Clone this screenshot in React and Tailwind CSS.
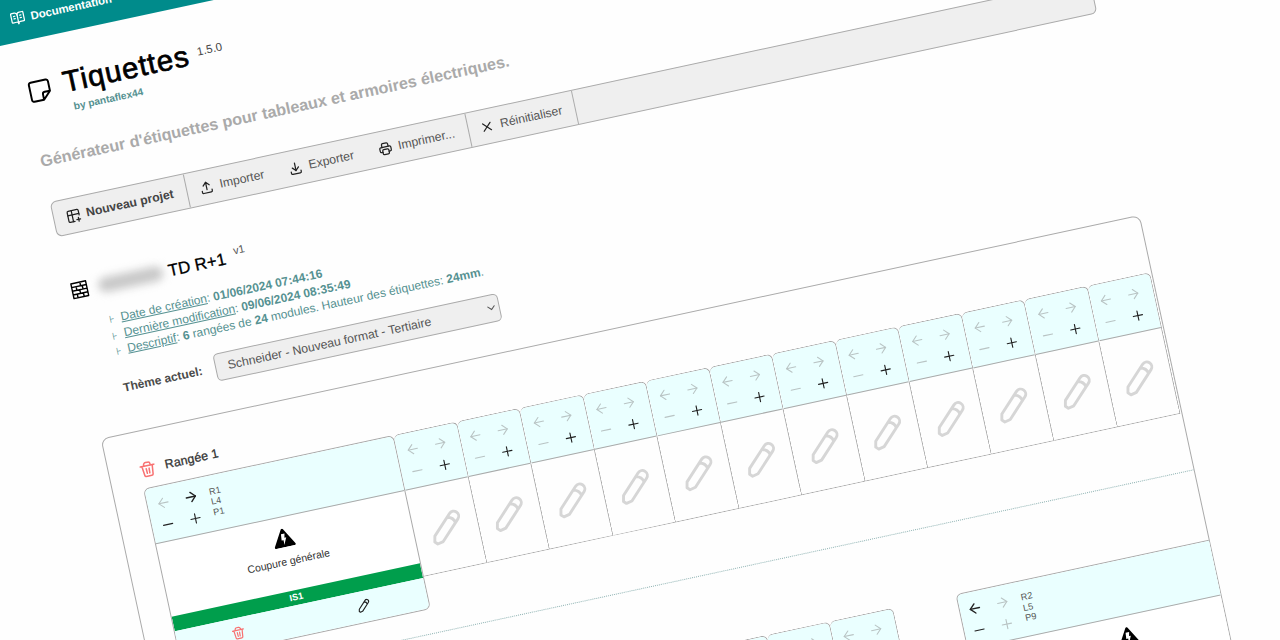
import React from 'react';
import { TbTablePlus, TbUpload, TbDownload, TbPrinter, TbX } from 'react-icons/tb';
import { ArrowLeft, ArrowRight, Plus, Minus, ChevronDown, BookOpenText } from 'lucide-react';

function Trash({ className }) {
  return (
    <svg viewBox="0 0 24 24" fill="none" stroke="currentColor" strokeWidth="2.1" strokeLinecap="round" strokeLinejoin="round" className={className}>
      <path d="M2.500 7h19M4.800 7l1.400 12.700a2 2 0 0 0 2 1.800h7.600a2 2 0 0 0 2-1.800L19.200 7M7.500 7V5.500a3 3 0 0 1 3-3h3a3 3 0 0 1 3 3V7M10 11l.3 6.500M14 11l-.3 6.500" />
    </svg>
  );
}

function Pencil({ className }) {
  return (
    <svg viewBox="-18 -18 36 36" fill="none" stroke="currentColor" strokeWidth="2.9" strokeLinecap="round" strokeLinejoin="round" className={className}>
      <path transform="rotate(45)" d="M-5-14a5 5 0 0 1 10 0V13L1.800 18h-3.600L-5 13zM-5-9.500q5-3.500 10 0" />
    </svg>
  );
}

function Note({ className }) {
  return (
    <svg viewBox="0 0 24 24" fill="none" stroke="currentColor" strokeWidth="1.8" strokeLinecap="round" strokeLinejoin="round" className={className}>
      <path d="M14 21H5a2 2 0 0 1-2-2V5a2 2 0 0 1 2-2h14a2 2 0 0 1 2 2v9zM14 21v-5a2 2 0 0 1 2-2h5" />
    </svg>
  );
}

function Wall({ className }) {
  return (
    <svg viewBox="0 0 24 24" fill="none" stroke="currentColor" strokeWidth="1.7" strokeLinejoin="round" className={className}>
      <path d="M3 3h18v18H3zM3 7.500h18M3 12h18M3 16.500h18M14 3v4.500M8.500 7.500V12M16 7.500V12M12 12v4.500M8 16.500V21M15.500 16.500V21" />
    </svg>
  );
}

function Danger({ className }) {
  return (
    <svg viewBox="0 0 24 21" className={className}>
      <path d="M12 1.500L22.500 19.500H1.500z" fill="#000" stroke="#000" strokeWidth="2.600" strokeLinejoin="round" />
      <path d="M10 6h4l-1 4.500h2l-3.800 8 .3-5.500H9.300z" fill="#fff" />
    </svg>
  );
}

const on = 'text-[#222]';
const off = 'text-[#b9c4c4]';

function Head({ left, right, minus, plus, lines }) {
  return (
    <div className="flex h-[56px] bg-[#eaffff] border-b border-[#aaa] pt-[5.500px] pl-[2px]">
      <div className="grid h-[44.400px] w-[55.600px] shrink-0 grid-cols-2 place-items-center">
        <ArrowLeft className={`size-[16px] ${left ? on : off}`} strokeWidth={left ? 2.100 : 1.600} />
        <ArrowRight className={`size-[16px] ${right ? on : off}`} strokeWidth={right ? 2.100 : 1.600} />
        <Minus className={`size-[16px] ${minus ? on : off}`} strokeWidth={1.700} />
        <Plus className={`size-[16px] ${plus ? on : off}`} strokeWidth={1.700} />
      </div>
      {lines && (
        <div className="pl-[5.200px] pt-[5.500px] text-[9.200px] leading-[10.300px] text-[#555]">
          {lines.map((l) => <div key={l}>{l}</div>)}
        </div>
      )}
    </div>
  );
}

function EmptyModule() {
  return (
    <div className="h-[144.500px] w-[64.500px] shrink-0 overflow-hidden rounded-t-[6px] border-t border-r border-b border-[#aaa]">
      <Head plus />
      <div className="flex h-[90px] items-center justify-center">
        <Pencil className="size-[36px] text-[#d6d6d6]" />
      </div>
    </div>
  );
}

function Module({ className, label, tag, ...head }) {
  return (
    <div className={`shrink-0 overflow-hidden rounded-[6px] border border-[#aaa] bg-white ${className}`}>
      <Head {...head} />
      <div className="-ml-[2px] flex h-[73.500px] flex-col items-center pt-[11px]">
        <Danger className="h-[19px] w-[22px]" />
        <div className="mt-[6.500px] text-[10.500px] leading-[14px] text-[#333]">{label}</div>
      </div>
      <div className="h-[15px] bg-[#009e4c] pr-[2px] text-center text-[9.200px] font-bold leading-[15px] text-white">{tag}</div>
      <div className="-ml-[2px] grid h-[31px] grid-cols-2 place-items-center bg-[#eaffff]">
        <Trash className="size-[14px] text-[#f87272]" />
        <Pencil className="size-[14px] text-[#222]" />
      </div>
    </div>
  );
}

function RowTitle({ children }) {
  return (
    <div className="flex h-[20px] items-center gap-[9px]">
      <Trash className="size-[17.500px] text-[#f87272]" />
      <span className="text-[12.300px] tracking-[0.150px] text-[#333] [-webkit-text-stroke:0.3px_#333]">{children}</span>
    </div>
  );
}

function Tool({ icon: Icon, className = '', children }) {
  return (
    <div className={`flex items-center gap-[6px] ${className}`}>
      <Icon className="size-[15px] text-[#222]" />
      <span>{children}</span>
    </div>
  );
}

function Detail({ children }) {
  return (
    <li className="flex h-[16.200px] items-center">
      <span className="w-[12px] pt-[3px] text-[10px] leading-none">⊦</span>
      <span className="whitespace-pre">{children}</span>
    </li>
  );
}

export default function App() {
  return (
    <div className="h-[640px] w-[1280px] overflow-hidden bg-[#fefefe] font-['Liberation_Sans',Arial,sans-serif]">
      <div className="h-[960px] w-[1300px] origin-top-left rotate-[-12.150deg] whitespace-nowrap">
        <header className="-ml-[40px] flex h-[45.400px] items-center bg-[#008b8b] pl-[45.500px] text-white">
          <BookOpenText className="mb-[1.500px] size-[15px]" strokeWidth={2} />
          <span className="ml-[6px] text-[11.400px] font-bold">Documentation</span>
        </header>

        <main className="pl-[5.500px]">
          <div className="flex h-[101.600px] pt-[27.700px]">
            <Note className="mt-[10.500px] ml-[1.800px] size-[26px] text-black" />
            <div className="ml-[7px]">
              <div className="flex h-[42px]">
                <h1 className="pt-[4px] pl-[4px] text-[29.400px] leading-[34px] tracking-[1px] text-black [-webkit-text-stroke:0.7px_#000]">Tiquettes</h1>
                <span className="ml-[8.500px] pt-[11.500px] text-[11.500px] leading-[14px] text-[#444]">1.5.0</span>
              </div>
              <div className="-mt-[1.500px] ml-[9.500px] text-[10.200px] leading-[12px] font-bold text-[#559191]">by pantaflex44</div>
            </div>
          </div>
          <p className="h-[20px] pt-[9px] text-[16.240px] leading-[20px] font-bold text-[#aaa]">Générateur d'étiquettes pour tableaux et armoires électriques.</p>

          <div className="mt-[41.400px] flex h-[35.500px] w-[1064.500px] overflow-hidden rounded-[6px] border border-[#aaa] bg-[#efefef] text-[12.270px] text-[#555]">
            <Tool icon={TbTablePlus} className="w-[136.500px] border-r border-[#aaa] pl-[12px] font-bold text-[#444]">Nouveau projet</Tool>
            <div className="flex w-[288px] border-r border-[#aaa] pl-[12px]">
              <Tool icon={TbUpload} className="w-[91px]">Importer</Tool>
              <Tool icon={TbDownload} className="w-[91.500px]">Exporter</Tool>
              <Tool icon={TbPrinter}>Imprimer...</Tool>
            </div>
            <Tool icon={TbX} className="w-[109px] border-r border-[#aaa] pl-[11px]">Réinitialiser</Tool>
          </div>

          <section className="pt-[43.500px] pl-[1.500px]">
            <div className="flex h-[26px] items-center">
              <Wall className="size-[20px] text-black" />
              <div className="mt-[1px] ml-[9px] h-[15px] w-[66px] rounded-full bg-[#c8c8c8] blur-[4px]" />
              <h2 className="ml-[5.500px] text-[16.900px] text-black [-webkit-text-stroke:0.3px_#000]">TD R+1</h2>
              <span className="mb-[12px] ml-[9px] text-[11px] text-[#555]">v1</span>
            </div>
            <ul className="mt-[13.500px] ml-[32.300px] text-[12px] text-[#559191]">
              <Detail><u>Date de création</u>: <b>01/06/2024 07:44:16</b></Detail>
              <Detail><u>Dernière modification</u>: <b>09/06/2024 08:35:49</b></Detail>
              <Detail><u>Descriptif</u>: <b>6</b> rangées de <b>24</b> modules. Hauteur des étiquettes: <b>24mm</b>.</Detail>
            </ul>
            <div className="mt-[15.500px] ml-[32px] flex h-[28px] items-center">
              <label className="w-[93.500px] text-[12px] font-bold text-[#4a4a4a]">Thème actuel:</label>
              <div className="flex h-[28px] w-[291px] items-center justify-between rounded-[5px] border border-[#aaa] bg-[#efefef] pr-[1px] pl-[12.500px] text-[12.270px] text-[#555]">
                Schneider - Nouveau format - Tertiaire
                <ChevronDown className="size-[13px]" />
              </div>
            </div>
          </section>

          <section className="mt-[30.600px] h-[560px] w-[1063.500px] overflow-hidden rounded-[8px] border border-[#aaa]">
            <div className="h-[260.800px] border-b border-dotted border-[#8fb3b3] pt-[29px] pl-[30.500px]">
              <RowTitle>Rangée 1</RowTitle>
              <div className="mt-[8.500px] flex">
                <Module className="w-[256px]" right minus plus lines={['R1', 'L4', 'P1']} label="Coupure générale" tag="IS1" />
                {Array.from({ length: 12 }, (_, i) => <EmptyModule key={i} />)}
              </div>
            </div>
            <div className="pt-[42.500px] pl-[30.500px]">
              <RowTitle>Rangée 2</RowTitle>
              <div className="mt-[8.500px] flex">
                <Module className="w-[256px]" right minus plus lines={['R2', 'L4', 'P1']} label="Coupure générale" tag="IS2" />
                {Array.from({ length: 7 }, (_, i) => <EmptyModule key={i} />)}
                <div className="w-[64px] shrink-0" />
                <Module className="w-[322.500px]" left minus lines={['R2', 'L5', 'P9']} label="Coupure générale" tag="IS3" />
              </div>
            </div>
          </section>
        </main>
      </div>
    </div>
  );
}
